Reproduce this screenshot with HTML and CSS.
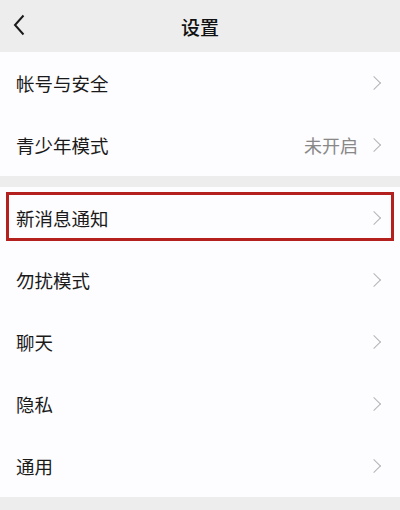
FILE: index.html
```html
<!DOCTYPE html>
<html lang="zh">
<head>
  <meta charset="UTF-8">
  <meta name="viewport" content="width=device-width, initial-scale=1.0">
  <title>设置</title>
  <link rel="stylesheet" href="styles.css">
</head>
<body>
  <div class="page">
    <div class="top-bar">
      <span class="back">
        <svg width="12" height="22" viewBox="0 0 12 22"><path d="M10.5 1.5 L2 11 L10.5 20.5" fill="none" stroke="#1a1a1a" stroke-width="2"/></svg>
      </span>
      <h1 class="title">设置</h1>
    </div>

    <div class="group">
      <div class="row"><span class="label">帐号与安全</span><span class="arrow"></span></div>
      <div class="row"><span class="label">青少年模式</span><span class="value">未开启</span><span class="arrow"></span></div>
    </div>

    <div class="group">
      <div class="row marked"><span class="label">新消息通知</span><span class="arrow"></span></div>
      <div class="row"><span class="label">勿扰模式</span><span class="arrow"></span></div>
      <div class="row"><span class="label">聊天</span><span class="arrow"></span></div>
      <div class="row"><span class="label">隐私</span><span class="arrow"></span></div>
      <div class="row"><span class="label">通用</span><span class="arrow"></span></div>
    </div>
  </div>
</body>
</html>
```

FILE: styles.css
```css
body {
  margin: 0;
  padding: 0;
  background-color: #ededed;
  font-family: "Noto Sans CJK SC", "Noto Sans", sans-serif;
  color: #1a1a1a;
}
.page {
  width: 400px;
  height: 510px;
  overflow: hidden;
}
.top-bar {
  height: 52px;
  position: relative;
  display: flex;
  align-items: center;
  justify-content: center;
  background-color: #ededed;
}
.back {
  position: absolute;
  left: 13px;
  top: 14px;
}
.title {
  margin: 0;
  font-size: 19px;
  font-weight: 500;
  color: #111;
}
.group {
  background-color: #fdfcfe;
  margin-bottom: 11px;
}
.row {
  height: 62px;
  display: flex;
  align-items: center;
  padding: 0 21px 0 16px;
  position: relative;
  box-sizing: border-box;
}
.label {
  flex: 1;
  font-size: 18.5px;
}
.value {
  font-size: 18px;
  color: #888;
  margin-right: 11px;
}
.arrow {
  width: 9px;
  height: 9px;
  border-top: 1.5px solid #b4b4b4;
  border-right: 1.5px solid #b4b4b4;
  transform: rotate(45deg);
}
.marked::after {
  content: "";
  position: absolute;
  left: 6px;
  right: 6px;
  top: 5px;
  bottom: 8px;
  border: 3px solid #b3201e;
}
```
